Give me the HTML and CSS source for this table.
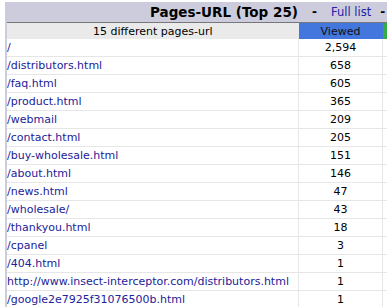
FILE: index.html
```html
<!DOCTYPE html>
<html lang="en">
    <head>
        <meta charset="UTF-8">
        <title>Pages-URL</title>
        <link rel="stylesheet" href="styles.css">
    </head>
    <body>
        <div class="wrap">
            <div class="box">
                <div class="title">
                    <b>Pages-URL (Top 25)</b>
                    <span class="dash">-</span>
                    <a href="#" class="full">Full list</a>
                    <span class="dash dash2">-</span>
                </div>
                <table class="data">
                    <tr class="sub">
                        <th class="url">15 different pages-url</th>
                        <th class="viewed">Viewed</th>
                        <th class="green"></th>
                    </tr>
                    <tr><td class="url"><a href="#">/</a></td><td class="num">2,594</td><td></td></tr>
                    <tr><td class="url"><a href="#">/distributors.html</a></td><td class="num">658</td><td></td></tr>
                    <tr><td class="url"><a href="#">/faq.html</a></td><td class="num">605</td><td></td></tr>
                    <tr><td class="url"><a href="#">/product.html</a></td><td class="num">365</td><td></td></tr>
                    <tr><td class="url"><a href="#">/webmail</a></td><td class="num">209</td><td></td></tr>
                    <tr><td class="url"><a href="#">/contact.html</a></td><td class="num">205</td><td></td></tr>
                    <tr><td class="url"><a href="#">/buy-wholesale.html</a></td><td class="num">151</td><td></td></tr>
                    <tr><td class="url"><a href="#">/about.html</a></td><td class="num">146</td><td></td></tr>
                    <tr><td class="url"><a href="#">/news.html</a></td><td class="num">47</td><td></td></tr>
                    <tr><td class="url"><a href="#">/wholesale/</a></td><td class="num">43</td><td></td></tr>
                    <tr><td class="url"><a href="#">/thankyou.html</a></td><td class="num">18</td><td></td></tr>
                    <tr><td class="url"><a href="#">/cpanel</a></td><td class="num">3</td><td></td></tr>
                    <tr><td class="url"><a href="#">/404.html</a></td><td class="num">1</td><td></td></tr>
                    <tr><td class="url"><a href="#">http://www.insect-interceptor.com/distributors.html</a></td><td class="num">1</td><td></td></tr>
                    <tr><td class="url"><a href="#">/google2e7925f31076500b.html</a></td><td class="num">1</td><td></td></tr>
                </table>
            </div>
        </div>
    </body>
</html>
```

FILE: styles.css
```css
body {
    margin: 0;
    overflow: hidden;
    font-family: "DejaVu Sans", Verdana, sans-serif;
    font-size: 11px;
    color: #000;
}

.wrap {
    padding: 2px 0 0 5px;
    width: 460px;
}

.box {
    background-color: #ccccdd;
    padding-left: 2px;
}

.title {
    display: flex;
    align-items: center;
    height: 20px;
    padding-left: 143px;
    border-bottom: 1px solid #777777;
    font-size: 13.5px;
}

.title b {
    font-weight: bold;
}

.dash {
    font-weight: bold;
    font-size: 12px;
    margin: 0 14px 0 14px;
}

.dash2 {
    margin: 0 0 0 9px;
}

.full {
    color: #2222aa;
    text-decoration: none;
    font-size: 11.5px;
}

.data {
    border-collapse: collapse;
    width: 453px;
    background-color: #ffffff;
}

.data th {
    font-weight: normal;
    height: 16px;
    padding: 0;
    text-align: center;
}

.sub th {
    background-color: #eaeaea;
}

.sub .viewed {
    background-color: #4477dd;
    color: #111;
}

.sub .green {
    background-color: #33aa44;
}

.data td {
    height: 17px;
    padding: 0;
    border-bottom: 1px solid #e6e6e6;
    border-right: 1px solid #e6e6e6;
}

.url {
    width: 291px;
    text-align: left;
}

.sub .url {
    text-align: center;
}

.data td.url {
    white-space: nowrap;
}

.url a {
    color: #222299;
    text-decoration: none;
}

.num {
    width: 83px;
    text-align: center;
}
```
